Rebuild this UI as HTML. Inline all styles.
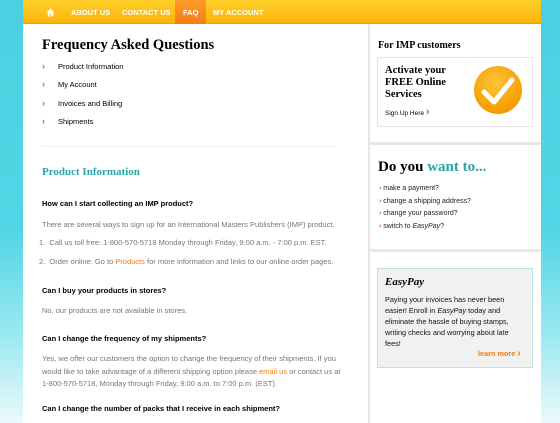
<!DOCTYPE html>
<html><head><meta charset="utf-8"><style>
*{margin:0;padding:0;box-sizing:border-box}
body{width:560px;height:423px;overflow:hidden;position:relative;font-family:"Liberation Sans",sans-serif;background:linear-gradient(#4ccfe0 0%,#52d6e6 55%,#9ee9f1 80%,#eafafc 100%)}
.a{position:absolute;white-space:nowrap}
.s{font-family:"Liberation Serif",serif;font-weight:bold}
.nav{left:23px;top:0;width:518px;height:24px;background:linear-gradient(#ffcf2a,#f9b50a);border-bottom:1px solid #f29a10}
.nav span{position:absolute;top:8px;color:#fff;font-size:7.5px;font-weight:bold}
.faq{position:absolute;left:152px;top:0;width:31px;height:24px;background:linear-gradient(#ff9a2c,#f67d12)}
.b{color:#f05a0a;font-size:9px;font-weight:bold}
.t{font-size:7.5px;color:#000}
.g{font-size:7.5px;color:#777}
.q{font-size:7.5px;font-weight:bold;color:#000}
.o{color:#f47a10}
.sb{color:#f05a0a;font-weight:bold}
</style></head><body>
<div class="a" style="left:23px;top:24px;width:345px;height:399px;background:#fff"></div>
<div class="a" style="left:368px;top:24px;width:2px;height:399px;background:#e6e6e6"></div>
<div class="a" style="left:370px;top:24px;width:171px;height:399px;background:#fff"></div>
<div class="a nav"><div class="faq"></div>
<svg style="position:absolute;left:23px;top:8px" width="9" height="9" viewBox="0 0 9 9"><path d="M4.5 0.5L0.5 4.5H1.8V8.5H3.8V6H5.2V8.5H7.2V4.5H8.5Z" fill="#fff"/></svg>
<span style="left:48px">ABOUT US</span><span style="left:99px">CONTACT US</span><span style="left:160px">FAQ</span><span style="left:190px">MY ACCOUNT</span></div>

<div class="a s" style="left:42px;top:37px;font-size:14.5px">Frequency Asked Questions</div>
<div class="a b" style="left:42px;top:61px">›</div><div class="a t" style="left:58px;top:62px">Product Information</div>
<div class="a b" style="left:42px;top:79px">›</div><div class="a t" style="left:58px;top:80px">My Account</div>
<div class="a b" style="left:42px;top:98px">›</div><div class="a t" style="left:58px;top:99px">Invoices and Billing</div>
<div class="a b" style="left:42px;top:116px">›</div><div class="a t" style="left:58px;top:117px">Shipments</div>
<div class="a" style="left:42px;top:146px;width:294px;height:1px;background:#eee"></div>
<div class="a s" style="left:42px;top:166px;font-size:11px;color:#2aa6a6">Product Information</div>
<div class="a q" style="left:42px;top:199px">How can I start collecting an IMP product?</div>
<div class="a g" style="left:42px;top:220px">There are several ways to sign up for an International Masters Publishers (IMP) product.</div>
<div class="a g" style="left:39px;top:238px">1.&nbsp; Call us toll free: 1-800-570-5718 Monday through Friday, 9:00 a.m. - 7:00 p.m. EST.</div>
<div class="a g" style="left:39px;top:257px">2.&nbsp; Order online: Go to <span class="o">Products</span> for more information and links to our online order pages.</div>
<div class="a q" style="left:42px;top:286px">Can I buy your products in stores?</div>
<div class="a g" style="left:42px;top:306px">No, our products are not available in stores.</div>
<div class="a q" style="left:42px;top:334px">Can I change the frequency of my shipments?</div>
<div class="a g" style="left:42px;top:353px;line-height:12.5px">Yes, we offer our customers the option to change the frequency of their shipments. If you<br>would like to take advantage of a different shipping option please <span class="o">email us</span> or contact us at<br>1-800-570-5718, Monday through Friday, 9:00 a.m. to 7:00 p.m. (EST).</div>
<div class="a q" style="left:42px;top:404px">Can I change the number of packs that I receive in each shipment?</div>

<div class="a s" style="left:378px;top:40px;font-size:10px">For IMP customers</div>
<div class="a" style="left:377px;top:57px;width:156px;height:70px;border:1px solid #e6e6e6"></div>
<div class="a s" style="left:385px;top:65px;font-size:10.5px;line-height:12px">Activate your<br>FREE Online<br>Services</div>
<div class="a" style="left:385px;top:109px;font-size:6.5px">Sign Up Here <span class="b" style="font-size:11px;line-height:6px">›</span></div>
<div class="a" style="left:474px;top:66px;width:48px;height:48px;border-radius:50%;background:radial-gradient(circle at 45% 35%,#ffc43a,#f7a306 60%,#e88e00)"></div>
<svg class="a" style="left:474px;top:66px" width="48" height="48" viewBox="0 0 48 48"><path d="M10 26L20 36L38 14" fill="none" stroke="#fff" stroke-width="5" stroke-linecap="round" stroke-linejoin="round"/></svg>
<div class="a" style="left:370px;top:142px;width:171px;height:3px;background:#e8e8e8"></div>
<div class="a s" style="left:378px;top:159px;font-size:15px">Do you <span style="color:#2aa6a6">want to...</span></div>
<div class="a" style="left:379px;top:183px;font-size:7px;line-height:12.6px;color:#222"><span class="sb">›</span> make a payment?<br><span class="sb">›</span> change a shipping address?<br><span class="sb">›</span> change your password?<br><span class="sb">›</span> switch to <i>EasyPay</i>?</div>
<div class="a" style="left:370px;top:249px;width:171px;height:3px;background:#e8e8e8"></div>
<div class="a" style="left:377px;top:268px;width:156px;height:100px;background:#f1f1f1;border:1px solid #b9e3e6"></div>
<div class="a s" style="left:385px;top:276px;font-size:11px;font-style:italic">EasyPay</div>
<div class="a" style="left:385px;top:294px;font-size:7.3px;line-height:11px;color:#111">Paying your invoices has never been<br>easier! Enroll in <i>EasyPay</i> today and<br>eliminate the hassle of buying stamps,<br>writing checks and worrying about late<br>fees!</div>
<div class="a o" style="left:478px;top:349px;font-size:7.3px;font-weight:bold">learn more <span style="font-size:10px;line-height:6px">›</span></div>
</body></html>
